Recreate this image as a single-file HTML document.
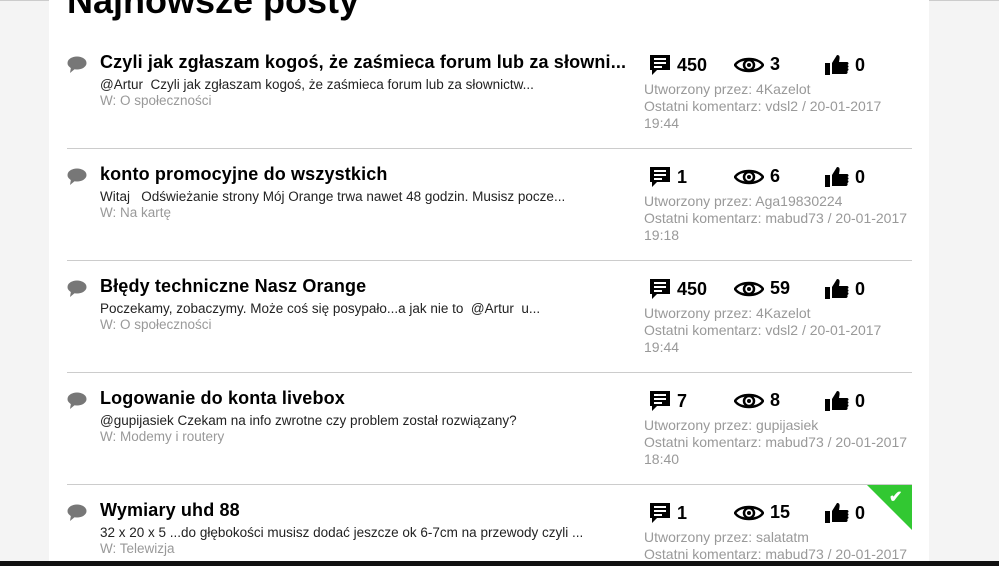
<!DOCTYPE html>
<html style="height:566px;overflow:hidden"><head><meta charset="utf-8"><style>
body{margin:0;width:999px;height:566px;overflow:hidden;background:#f4f4f4;font-family:"Liberation Sans",Arial,sans-serif;position:relative}
.panel{position:absolute;left:49px;top:0;width:880px;height:566px;background:#fff}
.topline{position:absolute;left:0;top:0;width:999px;height:1px;background:#ccc}
.bottom{position:absolute;left:0;top:561px;width:999px;height:5px;background:#111}
h1{position:absolute;left:67px;top:-20px;margin:0;font-size:36px;font-weight:bold;color:#000}
.row{position:absolute;left:67px;width:845px;height:112px;overflow:hidden}
.sep{position:absolute;left:0;bottom:0;width:845px;height:1px;background:#ccc}
.bub{position:absolute;left:0;top:19px}
.t{position:absolute;left:33px;top:15px;font-size:18px;letter-spacing:0.15px;font-weight:bold;color:#000;white-space:nowrap}
.x{position:absolute;left:33px;top:40px;font-size:13.5px;color:#222;white-space:pre}
.w{position:absolute;left:33px;top:56px;font-size:13.5px;color:#999}
.st{position:absolute;top:17px;font-size:18px;font-weight:bold;color:#000;display:flex;align-items:center}
.st svg{margin-right:6px}
.meta{position:absolute;left:577px;top:44px;font-size:14px;color:#999;line-height:17px;white-space:nowrap}
.tri{position:absolute;left:800px;top:0;width:0;height:0;border-top:45px solid #32c832;border-left:45px solid transparent}
.chk{position:absolute;left:822px;top:2px;color:#fff;font-size:16px;font-weight:bold}
</style></head><body>
<div class="topline"></div>
<div class="panel"></div>
<h1>Najnowsze posty</h1>
<svg width="0" height="0" style="position:absolute"><defs>
<symbol id="b" viewBox="0 0 20 18"><ellipse cx="10" cy="7" rx="9.5" ry="6.5" fill="#777"/><path d="M4 11 L3 17 L9 12Z" fill="#777"/></symbol>
<symbol id="c" viewBox="0 0 22 22"><path d="M1 1h20v15H8l-5 5v-5H1z" fill="#000"/><path d="M5 5h12M5 9h12M5 13h8" stroke="#fff" stroke-width="2"/></symbol>
<symbol id="e" viewBox="0 0 30 18"><path d="M1 9C6 1 24 1 29 9C24 17 6 17 1 9Z" fill="none" stroke="#000" stroke-width="2.5"/><circle cx="15" cy="9" r="5" fill="none" stroke="#000" stroke-width="2.5"/><circle cx="15" cy="9" r="2" fill="#000"/></symbol>
<symbol id="l" viewBox="0 0 24 22"><rect x="0" y="9" width="5" height="12" fill="#000"/><path d="M7 9L12 1c3 0 3 2 2 7h8c2 0 2 3 0 3 2 0 2 3 0 3 2 0 2 3 0 3 1 0 1 3-1 3H7z" fill="#000"/></symbol>
</defs></svg>
<div id="rows"></div>
<script>
var d=[["Czyli jak zgłaszam kogoś, że zaśmieca forum lub za słowni...","@Artur  Czyli jak zgłaszam kogoś, że zaśmieca forum lub za słownictw...","O społeczności","450","3","0","4Kazelot","vdsl2","19:44"],
["konto promocyjne do wszystkich","Witaj   Odświeżanie strony Mój Orange trwa nawet 48 godzin. Musisz pocze...","Na kartę","1","6","0","Aga19830224","mabud73","19:18"],
["Błędy techniczne Nasz Orange","Poczekamy, zobaczymy. Może coś się posypało...a jak nie to  @Artur  u...","O społeczności","450","59","0","4Kazelot","vdsl2","19:44"],
["Logowanie do konta livebox","@gupijasiek Czekam na info zwrotne czy problem został rozwiązany?","Modemy i routery","7","8","0","gupijasiek","mabud73","18:40"],
["Wymiary uhd 88","32 x 20 x 5 ...do głębokości musisz dodać jeszcze ok 6-7cm na przewody czyli ...","Telewizja","1","15","0","salatatm","mabud73",""]];
var h="";d.forEach(function(r,i){var top=37+i*112;
h+='<div class="row" style="top:'+top+'px'+(i==4?';height:524px;height:'+(561-top)+'px':'')+'"><svg class="bub" width="20" height="18"><use href="#b"/></svg><div class="t">'+r[0]+'</div><div class="x">'+r[1]+'</div><div class="w">W: '+r[2]+'</div>'+
'<div class="st" style="left:582px"><svg width="22" height="22"><use href="#c"/></svg>'+r[3]+'</div>'+
'<div class="st" style="left:667px"><svg width="30" height="18"><use href="#e"/></svg>'+r[4]+'</div>'+
'<div class="st" style="left:758px"><svg width="24" height="22"><use href="#l"/></svg>'+r[5]+'</div>'+
'<div class="meta">Utworzony przez: '+r[6]+'<br>Ostatni komentarz: '+r[7]+' / 20-01-2017<br>'+r[8]+'</div>'+
(i<4?'<div class="sep"></div>':'<div class="tri"></div><div class="chk">✔</div>')+'</div>';});
document.getElementById("rows").innerHTML=h;
</script>
<div class="bottom"></div>
</body></html>
